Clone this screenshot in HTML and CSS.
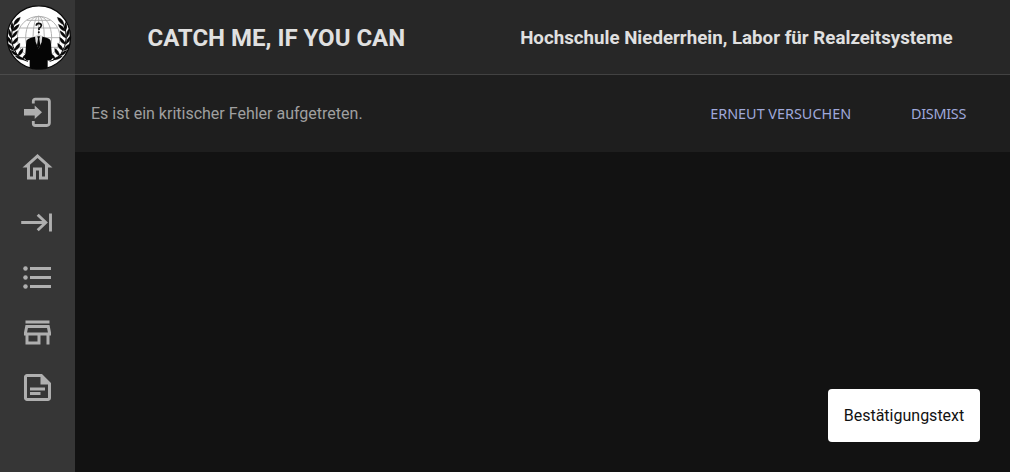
FILE: index.html
```html
<!DOCTYPE html>
<html lang="de">
<head>
<meta charset="utf-8">
<title>Catch me, if you can</title>
<link rel="stylesheet" href="styles.css">
</head>
<body>
<div class="app">
  <aside class="sidebar">
    <div class="brand">
      <svg class="logo" viewBox="0 0 225 225">
        <circle cx="116.500" cy="112.500" r="95" fill="#fff" stroke="#080808" stroke-width="4"/>
        <g fill="none" stroke="#adadad" stroke-width="2.800">
          <circle cx="116" cy="113" r="64"/>
          <ellipse cx="116" cy="113" rx="39" ry="64"/>
          <ellipse cx="116" cy="113" rx="17" ry="64"/>
          <path d="M52 113H180M60 84H172M80 61H152M60 142H172M116 49V177"/>
        </g>
        <g id="laurel">
          <path d="M43 71Q23 118 49 160Q61 179 84 184" fill="none" stroke="#080808" stroke-width="3"/>
          <g fill="#080808" stroke="#080808" stroke-width="1">
            <path d="M61 52Q42 57 41 75Q57 70 61 52Z"/>
            <path d="M58 73Q42 78 36 94Q54 91 58 73Z"/>
            <path d="M53 92Q38 99 34 114Q51 109 53 92Z"/>
            <path d="M54 112Q40 119 36 133Q54 130 54 112Z"/>
            <path d="M60 130Q46 136 43 152Q60 148 60 130Z"/>
            <path d="M69 145Q55 153 54 168Q70 163 69 145Z"/>
            <path d="M36 67Q28 80 37 94Q44 80 36 67Z"/>
            <path d="M27 87Q21 101 33 113Q37 100 27 87Z"/>
            <path d="M22 108Q20 123 35 133Q36 119 22 108Z"/>
            <path d="M23 131Q25 147 42 152Q39 137 23 131Z"/>
            <path d="M32 151Q38 166 54 168Q48 154 32 151Z"/>
            <path d="M46 168Q56 181 74 179Q63 167 46 168Z"/>
            <path d="M80 162Q68 166 68 177Q80 174 83 168Z"/>
          </g>
        </g>
        <use href="#laurel" transform="matrix(-1 0 0 1 233 0)"/>
        <path d="M79 122Q82 116 102 111L116 105L131 111Q149 115 152 122L157 176Q149 185 143 181V203Q116 213 89 203V180Q79 184 75 177Z" fill="#050505"/>
        <path d="M105 108L116 103L127 108L125 126L116 146L107 126Z" fill="#ddd"/>
        <path d="M112 109H120L118 116L121 136L116 147L111 136L114 116Z" fill="#050505"/>
        <path d="M109 77Q109 70 116 70Q124 70 124 77Q123 82 117 85V90" fill="none" stroke="#111" stroke-width="5"/>
        <circle cx="116.500" cy="97" r="3" fill="#111"/>
      </svg>
    </div>
    <nav class="nav">
      <a class="nav-item"><svg viewBox="0 0 36 36"><path d="M13.700 9.200V6.700a2 2 0 0 1 2-2H27.300a2.500 2.500 0 0 1 2.500 2.500V28.600a2.500 2.500 0 0 1-2.500 2.500H15.700a2 2 0 0 1-2-2V26.600" transform="translate(.6 .4)" fill="none" stroke="currentColor" stroke-width="2.800"/><path d="M5 15H15.700V11.500L23 18.300L15.700 25.100V21.600H5Z"/></svg></a>
      <a class="nav-item"><svg viewBox="-.33 -.33 24 24"><path d="M12 5.690l5 4.500V18h-2v-6H9v6H7v-7.810l5-4.500M12 3L2 12h3v8h6v-6h2v6h6v-8h3L12 3z"/></svg></a>
      <a class="nav-item"><svg viewBox="0 0 36 36"><path d="M2.200 18.500H27M18.700 10.700L26.800 18.500L18.700 26.300M31.500 9.500V27.500" fill="none" stroke="currentColor" stroke-width="2.900"/></svg></a>
      <a class="nav-item"><svg viewBox="-.33 -.33 24 24"><circle cx="4" cy="6" r="1.500"/><circle cx="4" cy="12" r="1.500"/><circle cx="4" cy="18" r="1.500"/><path d="M7 5H21V7H7ZM7 11H21V13H7ZM7 17H21V19H7Z"/></svg></a>
      <a class="nav-item"><svg viewBox="-.33 -.33 24 24"><path d="M18.360 9l.6 3H5.040l.6-3h12.720M20 4H4v2h16V4zm0 3H4l-1 5v2h1v6h10v-6h4v6h2v-6h1v-2l-1-5zM6 18v-4h6v4H6z"/></svg></a>
      <a class="nav-item"><svg viewBox="-.33 -.33 24 24"><path d="M15 3H5c-1.100 0-2 .9-2 2v14c0 1.100.9 2 2 2h14c1.100 0 2-.9 2-2V9l-6-6zm4 16H5V5h9v5h5v9zM7 12h10v2H7zM7 15h7v2H7z"/></svg></a>
    </nav>
  </aside>
  <div class="content">
    <header class="header">
      <h1 class="title">CATCH ME, IF YOU CAN</h1>
      <h2 class="subtitle">Hochschule Niederrhein, Labor für Realzeitsysteme</h2>
    </header>
    <section class="banner">
      <p class="message">Es ist ein kritischer Fehler aufgetreten.</p>
      <div class="actions">
        <button class="action">ERNEUT VERSUCHEN</button>
        <button class="action dismiss">DISMISS</button>
      </div>
    </section>
    <main class="main">
      <div class="toast">Bestätigungstext</div>
    </main>
  </div>
</div>
</body>
</html>
```
FILE: styles.css
```css
* { box-sizing: border-box; }
body {
  margin: 0;
  background: #121212;
  color: #e0e0e0;
  font-family: Roboto, sans-serif;
  font-size: 16px;
}
.app { display: flex; height: 100vh; overflow: hidden; }
.sidebar { flex: 0 0 75px; background: #363636; }
.brand { height: 75px; border-bottom: 1px solid #4b4b4b; }
.logo { display: block; width: 75px; height: 75px; }
.nav { padding-top: 10px; color: #afafaf; }
.nav-item {
  display: flex;
  height: 55px;
  align-items: center;
  justify-content: center;
  padding: 0 1px 1px 0;
}
.nav-item svg { width: 36px; height: 36px; fill: currentColor; }
.content { flex: 1; min-width: 0; display: flex; flex-direction: column; }
.header {
  flex: 0 0 75px;
  display: flex;
  align-items: center;
  justify-content: space-around;
  padding: 2px 0 0 15px;
  background: #272727;
  border-bottom: 1px solid #424242;
}
.title, .subtitle { margin: 0; font-weight: 700; white-space: nowrap; }
.title { font-size: 24px; }
.subtitle { font-size: 18.72px; }
.banner {
  flex: 0 0 77px;
  display: flex;
  align-items: center;
  justify-content: space-between;
  padding: 0 44px 0 16px;
  background: #1e1e1e;
}
.message { margin: 0; color: #a0a0a0; }
.actions { display: flex; gap: 60px; }
.action {
  padding: 0;
  border: 0;
  background: none;
  color: #9fa8da;
  font: 14.4px "Noto Sans", sans-serif;
  white-space: nowrap;
}
.dismiss { letter-spacing: -.3px; }
.main { flex: 1; display: flex; justify-content: flex-end; align-items: flex-end; padding: 30px; }
.toast {
  display: grid;
  place-items: center;
  width: 152px;
  height: 53px;
  border-radius: 4px;
  background: #fff;
  color: #121212;
}
```
